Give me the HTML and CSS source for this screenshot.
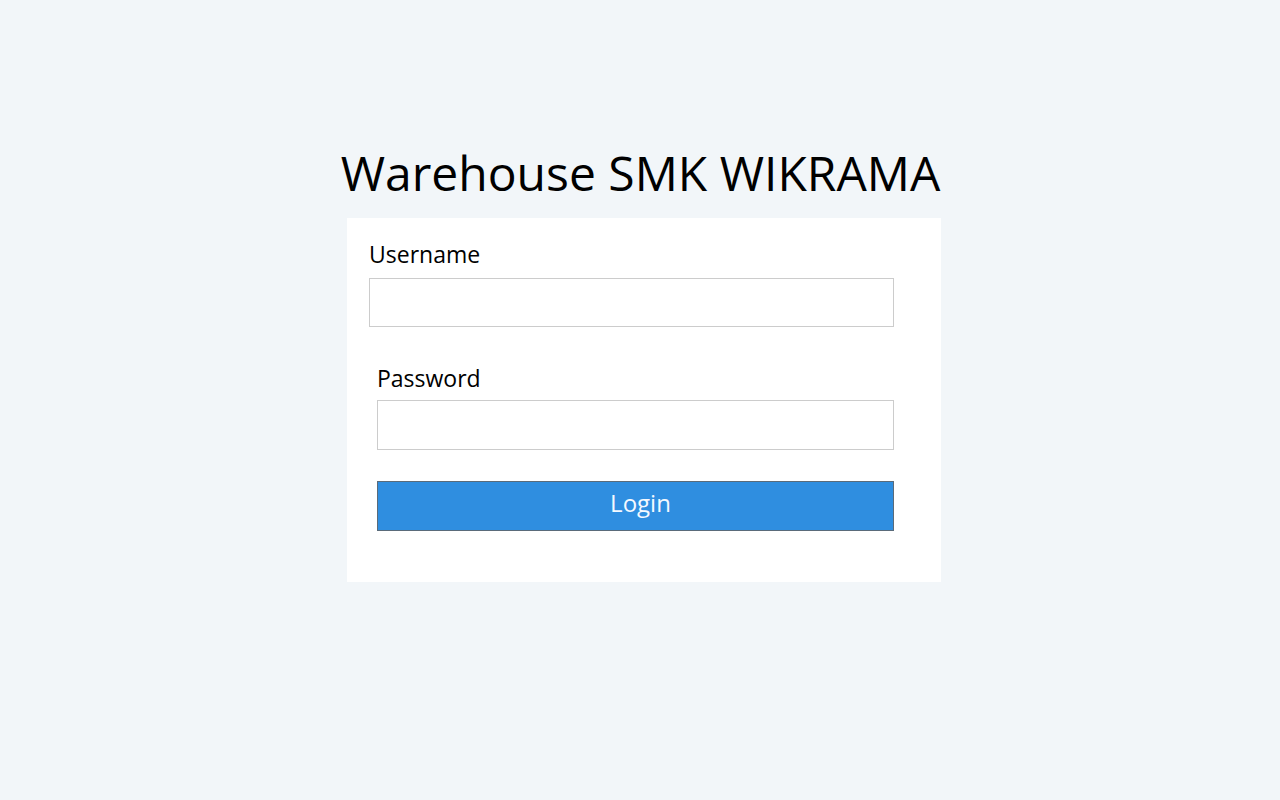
FILE: index.html
```html
<!DOCTYPE html>
<html lang="id">
<head>
<meta charset="utf-8">
<title>Warehouse SMK WIKRAMA</title>
<link rel="stylesheet" href="styles.css">
</head>
<body>
<main class="page">
  <h1 class="title">Warehouse SMK WIKRAMA</h1>
  <form class="card">
    <div class="field field-user">
      <label class="label" for="username">Username</label>
      <input class="input" id="username" type="text">
    </div>
    <div class="field field-pass">
      <label class="label" for="password">Password</label>
      <input class="input" id="password" type="password">
    </div>
    <button class="btn" type="button">Login</button>
  </form>
</main>
</body>
</html>
```
FILE: styles.css
```css
html, body {
  margin: 0;
  padding: 0;
}
body {
  background: #f2f6f9;
  font-family: "Open Sans", "Noto Sans", sans-serif;
  color: #000;
  height: 800px;
}
.page {
  display: flex;
  flex-direction: column;
  align-items: center;
  padding-top: 140px;
}
.title {
  margin: 0 0 12px 0;
  font-weight: 400;
  font-size: 48px;
  line-height: 66px;
  padding-left: 1px;
}
.card {
  background: #fff;
  width: 594px;
  box-sizing: border-box;
  padding: 20px 47px 51px 22px;
  display: flex;
  flex-direction: column;
  margin-left: 8px;
}
.field {
  display: flex;
  flex-direction: column;
}
.label {
  font-size: 23px;
  line-height: 32px;
  margin-bottom: 8px;
}
.input {
  height: 49px;
  box-sizing: border-box;
  border: 1px solid #cccccc;
  background: #fff;
  margin: 0;
  padding: 0 10px;
  font: inherit;
}
.field-pass {
  margin-left: 8px;
  margin-top: 35px;
}
.field-pass .label {
  margin-bottom: 6px;
}
.field-pass .input {
  height: 50px;
}
.btn {
  margin: 31px 0 0 8px;
  height: 50px;
  background: #2f8ee0;
  border: 1px solid #5a6b7a;
  color: #f4f9ff;
  font-family: inherit;
  font-size: 24px;
  line-height: 30px;
  padding: 0 0 6px 10px;
  cursor: pointer;
}
```
